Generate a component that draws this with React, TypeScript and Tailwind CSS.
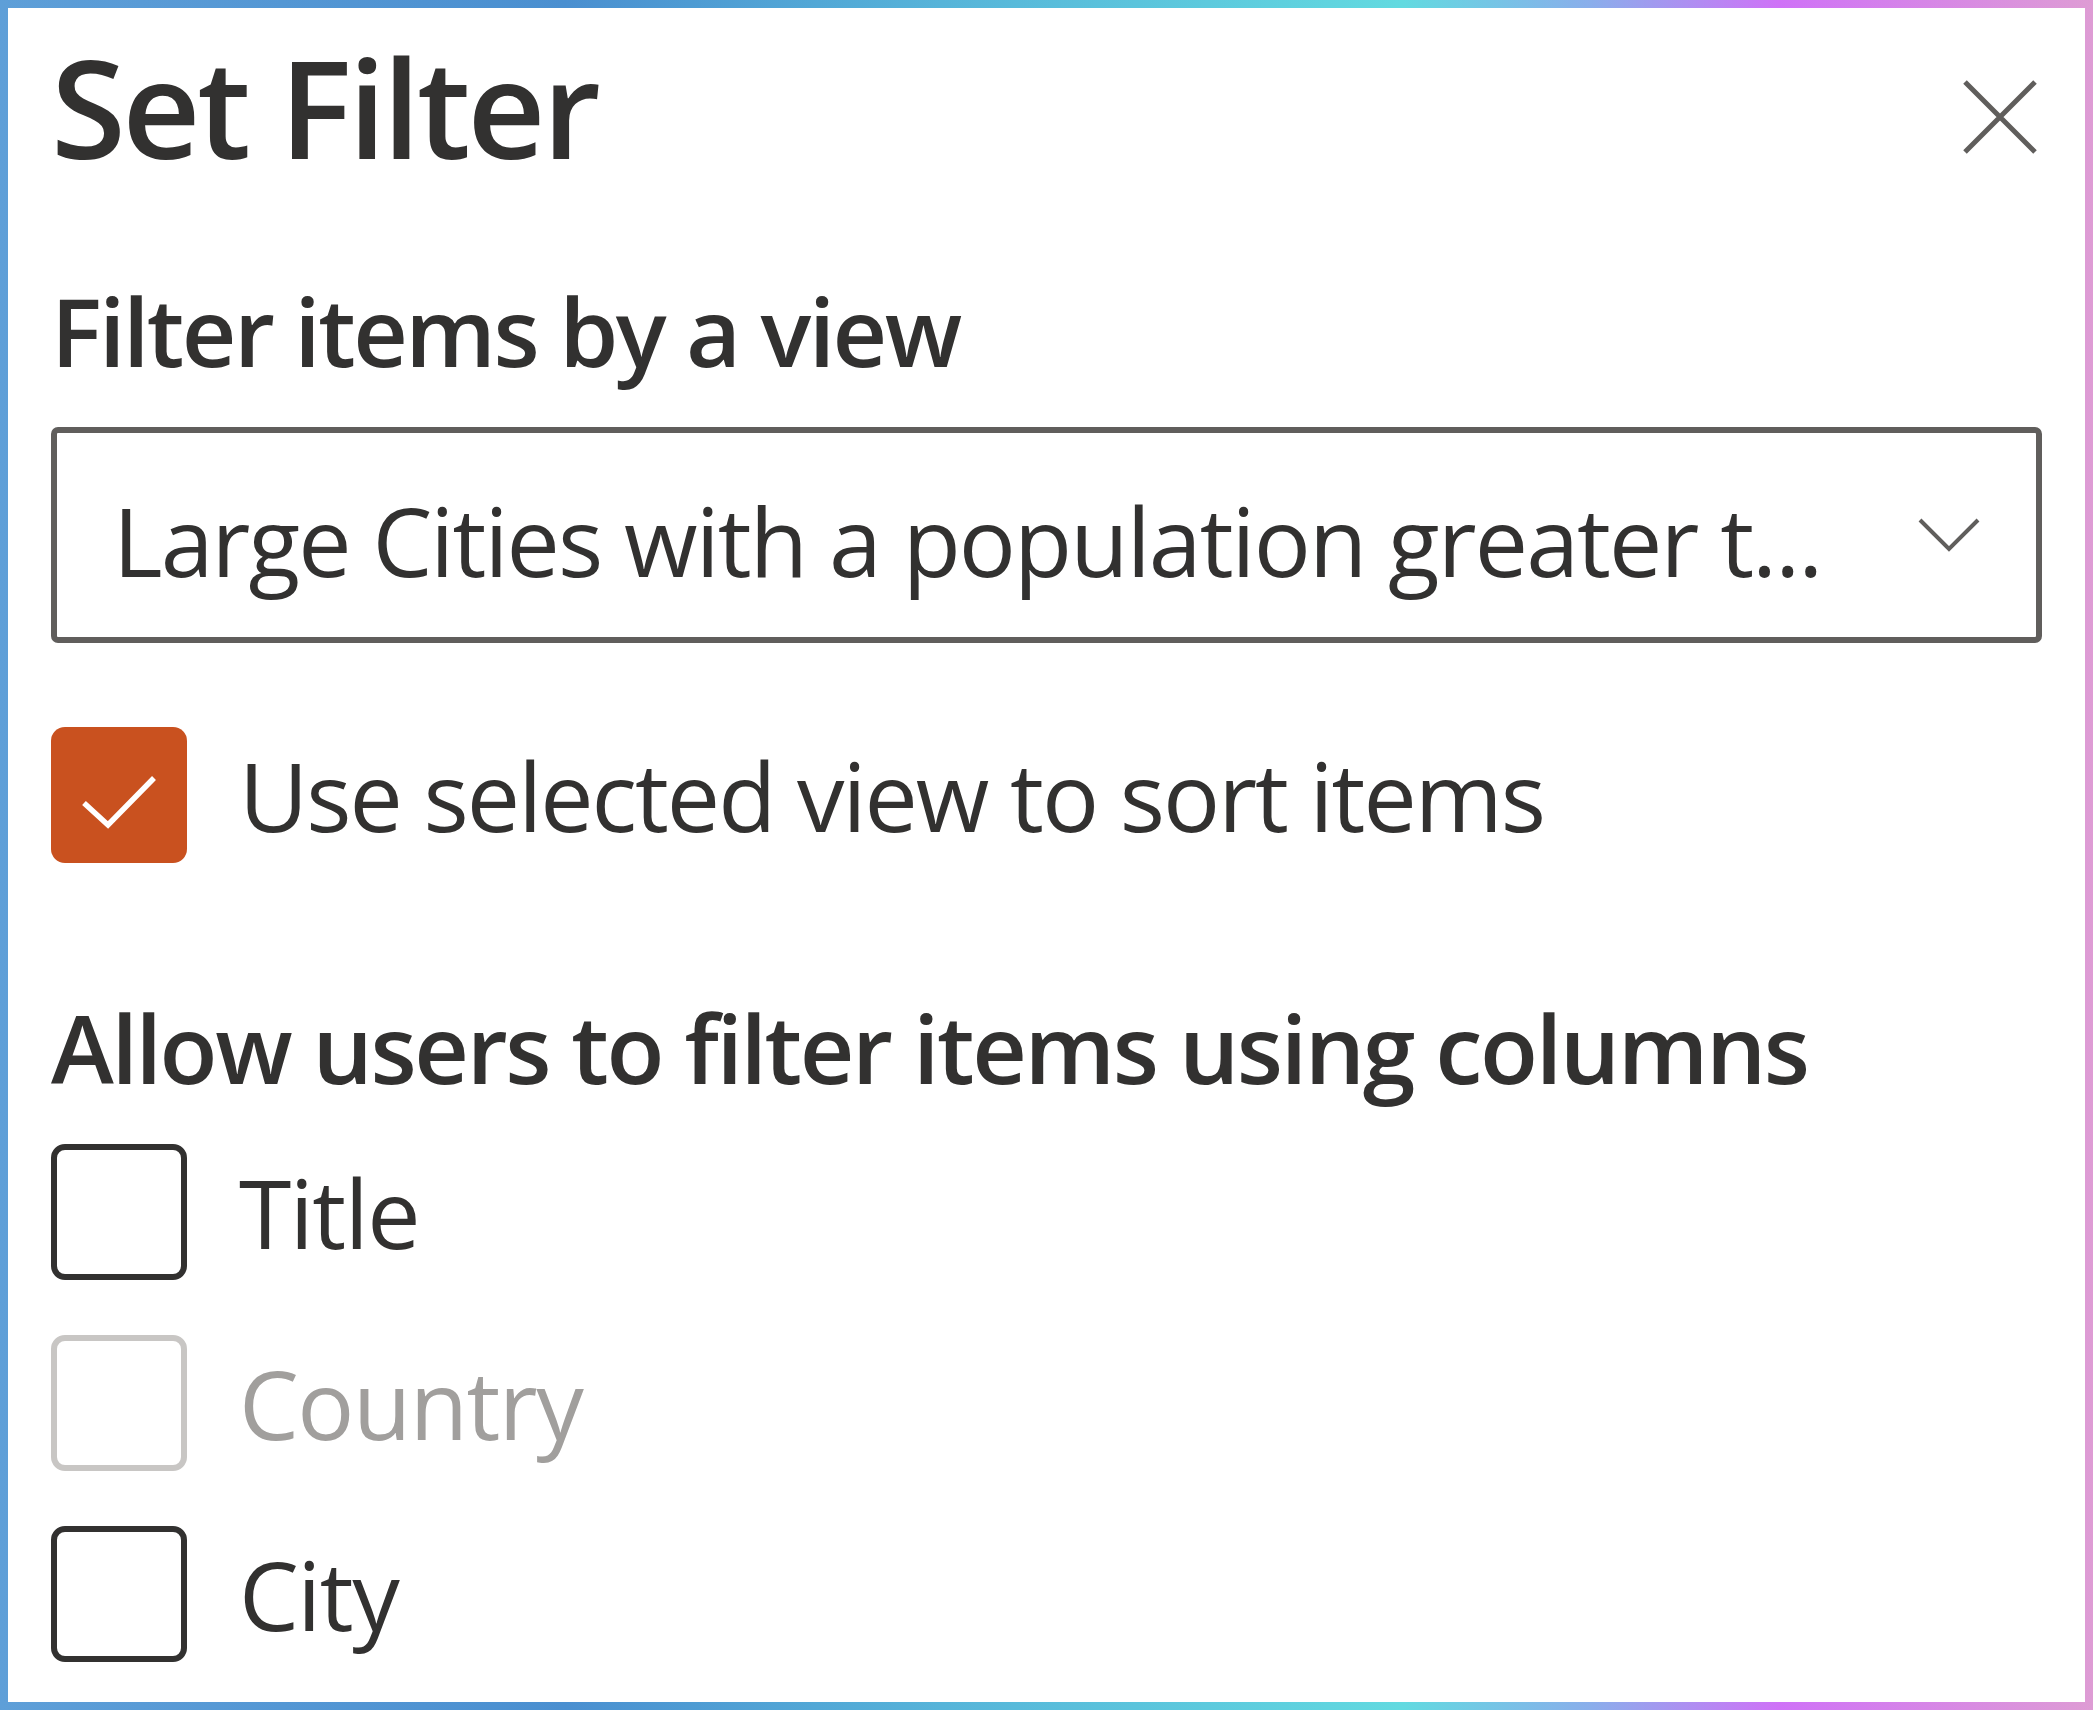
import { useState } from 'react';

const columns = [
  { label: 'Title', disabled: false },
  { label: 'Country', disabled: true },
  { label: 'City', disabled: false },
];

function CheckBox({ checked, disabled }: { checked?: boolean; disabled?: boolean }) {
  if (checked) {
    return (
      <div className="w-[136px] h-[136px] shrink-0 rounded-[14px] bg-[#c9511f] flex items-center justify-center">
        <svg width="136" height="136" viewBox="0 0 136 136" fill="none">
          <polyline points="33,76 57,98 103,51" stroke="#ffffff" strokeWidth="5.5" />
        </svg>
      </div>
    );
  }
  return (
    <div
      className={
        disabled
          ? 'w-[136px] h-[136px] shrink-0 rounded-[14px] border-[6px] border-[#c8c6c4] bg-white'
          : 'w-[136px] h-[136px] shrink-0 rounded-[14px] border-[6px] border-[#323130] bg-white'
      }
    />
  );
}

export default function App() {
  const [sortByView] = useState(true);

  return (
    <div
      className="w-[2093px] h-[1710px] p-[8px] bg-[linear-gradient(90deg,#5e9fd8_0%,#4a8fd0_27%,#56b4d9_45%,#62dae0_67%,#8aaeeb_76%,#cf72f7_85%,#de9cd4_100%)]"
      style={{ fontFamily: '"Open Sans", "Noto Sans", sans-serif' }}
    >
      <div className="w-full h-full bg-white px-[43px] pt-[31px] text-[#323130] flex flex-col">
        {/* header */}
        <div className="flex items-start justify-between">
          <h1 className="text-[136px] leading-none font-semibold tracking-[-3.5px]">Set Filter</h1>
          <svg className="mt-[41px] mr-[5px]" width="74" height="74" viewBox="0 0 74 74" fill="none">
            <path d="M2 2 L72 72 M72 2 L2 72" stroke="#605e5c" strokeWidth="5" />
          </svg>
        </div>

        <div className="mt-[108px] text-[95px] leading-none font-semibold tracking-[-2.6px]">
          Filter items by a view
        </div>

        {/* dropdown */}
        <div className="mt-[49px] h-[216px] border-[6px] border-[#605e5c] rounded-[7px] flex items-center pl-[56px] pr-[56px] pt-[10px]">
          <span className="flex-1 text-[95px] leading-none tracking-[-1.9px] whitespace-nowrap">
            Large Cities with a population greater t...
          </span>
          <svg className="-mt-[10px] shrink-0" width="62" height="34" viewBox="0 0 62 34" fill="none">
            <polyline points="2,2 31,31 60,2" stroke="#605e5c" strokeWidth="4" />
          </svg>
        </div>

        <div className="mt-[84px] flex items-center gap-[52px]">
          <CheckBox checked={sortByView} />
          <span className="text-[95px] leading-none tracking-[-2px]">Use selected view to sort items</span>
        </div>

        <div className="mt-[137px] text-[95px] leading-none font-semibold tracking-[-2.4px]">
          Allow users to filter items using columns
        </div>

        <div className="mt-[49px] flex flex-col gap-[55px]">
          {columns.map((c) => (
            <div key={c.label} className="flex items-center gap-[52px]">
              <CheckBox disabled={c.disabled} />
              <span className={c.disabled ? 'text-[95px] leading-none tracking-[-1.5px] text-[#a19f9d]' : 'text-[95px] leading-none tracking-[-1.5px]'}>
                {c.label}
              </span>
            </div>
          ))}
        </div>
      </div>
    </div>
  );
}
